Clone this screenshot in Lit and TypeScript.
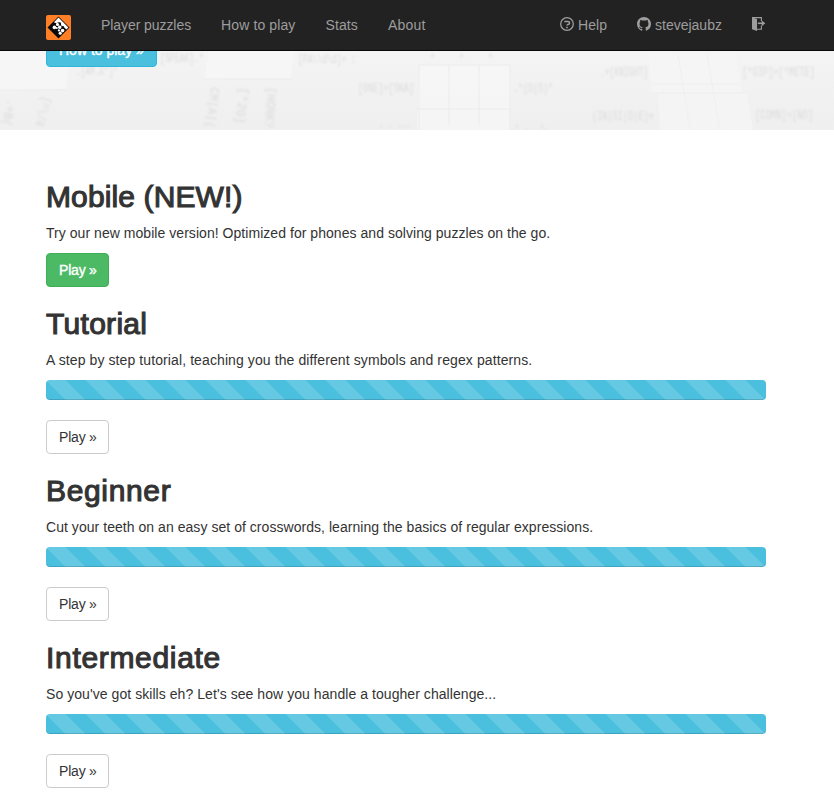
import { LitElement, html, css, svg } from "lit";
import { customElement } from "lit/decorators.js";

interface Level {
  key: string;
  title: string;
  text: string;
}

const LEVELS: Level[] = [
  { key: "tutorial", title: "Tutorial", text: "A step by step tutorial, teaching you the different symbols and regex patterns." },
  { key: "beginner", title: "Beginner", text: "Cut your teeth on an easy set of crosswords, learning the basics of regular expressions." },
  { key: "intermediate", title: "Intermediate", text: "So you've got skills eh? Let's see how you handle a tougher challenge..." },
];

const logo = html`<svg class="logo" viewBox="0 0 25 25">
  <rect width="25" height="25" rx="2" fill="#ff7f27" />
  <path d="M12.5 1.5 23.5 12.5 12.5 23.5 1.5 12.5Z" fill="#0a0a0a" />
  <path d="M12.5 2.6 22.4 12.5 20.2 14.4 17.6 11.8 15.6 11.2 14.8 8.8 12.2 7.2 9.6 8.6 8 7.2Z" fill="#fff" />
  <g fill="#fff">
    <circle cx="11.6" cy="9.4" r="1.7" />
    <circle cx="8.4" cy="12.4" r="1.8" />
    <circle cx="13.8" cy="12.2" r="1.8" />
    <circle cx="10.8" cy="13" r="1" />
    <circle cx="16.6" cy="15.6" r="1.8" />
    <circle cx="14.2" cy="18.2" r="1.6" />
    <circle cx="12.9" cy="15.4" r="1.1" />
  </g>
  <g fill="#0a0a0a">
    <circle cx="9" cy="8.8" r="1.1" />
    <circle cx="13.8" cy="8.4" r="1.2" />
    <circle cx="16.8" cy="12.2" r="1.2" />
  </g>
</svg>`;

const helpIcon = html`<svg class="icon" viewBox="0 0 14 14" fill="none" stroke="currentColor">
  <circle cx="7" cy="7" r="6.3" stroke-width="1.3" />
  <path d="M4.3 4.6h3.6c1.1 0 1.7.5 1.7 1.3 0 1-.7 1.3-1.6 1.5-.7.2-1 .4-1 1.1" stroke-width="1.5" />
  <path d="M6.2 10.4h1.6" stroke-width="1.5" />
</svg>`;

const githubIcon = html`<svg class="icon" viewBox="0 0 16 16" fill="currentColor">
  <path d="M8 0C3.58 0 0 3.58 0 8c0 3.54 2.29 6.53 5.47 7.59.4.07.55-.17.55-.38 0-.19-.01-.82-.01-1.49-2.01.37-2.53-.49-2.69-.94-.09-.23-.48-.94-.82-1.13-.28-.15-.68-.52-.01-.53.63-.01 1.08.58 1.23.82.72 1.21 1.87.87 2.33.66.07-.52.28-.87.51-1.07-1.78-.2-3.64-.89-3.64-3.95 0-.87.31-1.59.82-2.15-.08-.2-.36-1.02.08-2.12 0 0 .67-.21 2.2.82.64-.18 1.32-.27 2-.27s1.36.09 2 .27c1.53-1.04 2.2-.82 2.2-.82.44 1.1.16 1.92.08 2.12.51.56.82 1.27.82 2.15 0 3.07-1.87 3.75-3.65 3.95.29.25.54.73.54 1.48 0 1.07-.01 1.93-.01 2.2 0 .21.15.46.55.38A8 8 0 0 0 16 8c0-4.42-3.58-8-8-8z" />
</svg>`;

const logoutIcon = html`<svg class="icon exit" viewBox="0 0 14 14" fill="none" stroke="currentColor">
  <path d="M0 0.3 5 2V14L0 12.2Z" fill="currentColor" stroke="none" />
  <path d="M0 .6H9.4V4.2M9.4 8.4V12.3H5" stroke-width="1.1" />
  <path d="M5.8 6.3H11" stroke-width="1.6" />
  <path d="M9.8 3.4 13.3 6.3 9.8 9.2Z" fill="currentColor" stroke="none" />
</svg>`;

const clue = (x: number, y: number, text: string, width: number, turn = 0) =>
  svg`<text transform="translate(${x} ${y}) rotate(${turn})" textLength=${width} lengthAdjust="spacingAndGlyphs">${text}</text>`;

const backdrop = html`<svg class="backdrop" viewBox="0 0 834 130" preserveAspectRatio="none">
  <defs>
    <linearGradient id="shade" x1="0" y1="0" x2="0" y2="1">
      <stop offset="0.38" stop-color="#f4f4f4" />
      <stop offset="1" stop-color="#efefef" />
    </linearGradient>
  </defs>
  <rect width="834" height="130" fill="url(#shade)" />
  <g fill="#f7f7f7" opacity=".65">
    <path d="M0 50H70L66 89 0 91ZM209 50H294L291 78 204 80ZM419 65H510V130H417Z" />
    <path d="M648 54H736L742 93H652ZM658 94H747L753 130H660Z" />
  </g>
  <g stroke="#ececec" stroke-width="1" fill="none">
    <path d="M0 90H66M204 79H291M419 65H510M417 109H510M419 65V130M449 65V125M479 65V125M510 65V130" />
    <path d="M652 84H740M652 93H745M678 54 690 130M707 54 720 130" stroke="#efefef" />
  </g>
  <g class="clues">
    ${clue(160, 62, "[SPEAK].*", 44)}
    ${clue(76, 75, ".[AM.X*]*", 42)}
    ${clue(298, 63, "[PA\\\\d\\d]+ :", 58)}
    ${clue(358, 92, "[ONE]+[SKA]", 56)}
    ${clue(513, 92, ".*(O|S)*", 40)}
    ${clue(600, 76, ".+[KNIGHT]", 48)}
    ${clue(742, 76, "[*GIP]+[*METE]", 73)}
    ${clue(592, 120, "(IN|SI|D|E)+", 62)}
    ${clue(755, 119, "[COMN]+[NO]", 58)}
    ${clue(8, 98, ".+B(", 28, 102)}
    ${clue(43, 96, "[^\\/4", 30, 105)}
    ${clue(211, 87, "CM|A|(", 41, 97)}
    ${clue(240, 87, "[*20]", 37, 97)}
    ${clue(268, 87, "[HONK?", 41, 94)}
    ${clue(379, 130, "- - ---", 32)}
    ${clue(515, 133, "* .- . *-", 32)}
    ${clue(430, 62, "*", 5)}${clue(459, 62, "*", 5)}${clue(488, 62, "*", 5)}
  </g>
</svg>`;

@customElement("app-root")
export class AppRoot extends LitElement {
  static styles = css`
    :host {
      display: block;
      height: 801px;
      overflow: hidden;
      background: #fff;
      color: #333;
      font: 14px/20px "Liberation Sans", Arial, sans-serif;
    }
    .navbar {
      position: absolute;
      top: 0;
      left: 0;
      right: 0;
      z-index: 2;
      height: 50px;
      background: #222;
      border-bottom: 1px solid #080808;
    }
    .container { width: 720px; margin-left: 46px; }
    .bar { display: flex; gap: 30px; padding-top: 15px; color: #9d9d9d; }
    .logo { width: 25px; height: 25px; display: block; }
    .link { display: flex; gap: 4px; white-space: nowrap; }
    .puzzles { width: 90px; letter-spacing: -0.07px; }
    .howto { width: 74.5px; letter-spacing: 0.12px; }
    .stats { width: 32.5px; letter-spacing: 0.1px; }
    .about { letter-spacing: 0.2px; }
    .help { margin-left: auto; width: 47px; letter-spacing: 0.1px; }
    .user { width: 85px; }
    .icon { width: 14px; height: 14px; flex: none; margin-top: 2px; }
    .jumbotron { position: relative; height: 130px; overflow: hidden; }
    .backdrop { position: absolute; inset: 0; width: 834px; height: 130px; }
    .clues {
      fill: #dcdcdc;
      font: 13px "Liberation Mono", monospace;
      filter: blur(0.8px);
    }
    .hero { position: relative; padding-top: 33px; }
    .btn {
      display: inline-block;
      box-sizing: border-box;
      height: 34px;
      width: 63px;
      padding: 6px 12px;
      border: 1px solid #ccc;
      border-radius: 4px;
      background: #fff;
      white-space: nowrap;
      letter-spacing: -0.2px;
    }
    .info, .success { color: #fff; -webkit-text-stroke: 0.35px #fff; }
    .info { width: 111px; background: #4bc0de; border-color: #2eb5d8; letter-spacing: 0; }
    .success { background: #4cba64; border-color: #3fae57; }
    .main { padding-top: 30px; }
    .level { display: flow-root; }
    h2 {
      margin: 20px 0 10px;
      font-size: 30px;
      line-height: 33px;
      font-weight: 400;
      -webkit-text-stroke: 1.1px #333;
    }
    p { margin: 0 0 10px; white-space: nowrap; letter-spacing: 0.045px; }
    .mobile h2 { letter-spacing: 0.12px; }
    .tutorial h2 { letter-spacing: 0.3px; }
    .tutorial p { letter-spacing: 0.1px; }
    .beginner h2 { letter-spacing: 0.65px; }
    .intermediate h2 { letter-spacing: 0.68px; }
    .intermediate p { letter-spacing: 0.06px; }
    .progress {
      height: 20px;
      margin-bottom: 20px;
      border-radius: 4px;
      background: #4bc0de linear-gradient(45deg, rgba(255, 255, 255, 0.15) 25%, transparent 25%, transparent 50%,
        rgba(255, 255, 255, 0.15) 50%, rgba(255, 255, 255, 0.15) 75%, transparent 75%, transparent) 0 0 / 40px 40px;
      box-shadow: inset 0 -1px 0 rgba(0, 0, 0, 0.15);
    }
  `;

  render() {
    return html`
      <nav class="navbar">
        <div class="container bar">
          ${logo}
          <a class="link puzzles">Player puzzles</a>
          <a class="link howto">How to play</a>
          <a class="link stats">Stats</a>
          <a class="link about">About</a>
          <a class="link help">${helpIcon}<span>Help</span></a>
          <a class="link user">${githubIcon}<span>stevejaubz</span></a>
          <a class="link">${logoutIcon}</a>
        </div>
      </nav>
      <header class="jumbotron">
        ${backdrop}
        <div class="container hero"><a class="btn info">How to play »</a></div>
      </header>
      <main class="container main">
        <section class="level mobile">
          <h2>Mobile (NEW!)</h2>
          <p>Try our new mobile version! Optimized for phones and solving puzzles on the go.</p>
          <a class="btn success">Play »</a>
        </section>
        ${LEVELS.map(
          (level) => html`<section class="level ${level.key}">
            <h2>${level.title}</h2>
            <p>${level.text}</p>
            <div class="progress"></div>
            <a class="btn">Play »</a>
          </section>`
        )}
      </main>
    `;
  }
}
